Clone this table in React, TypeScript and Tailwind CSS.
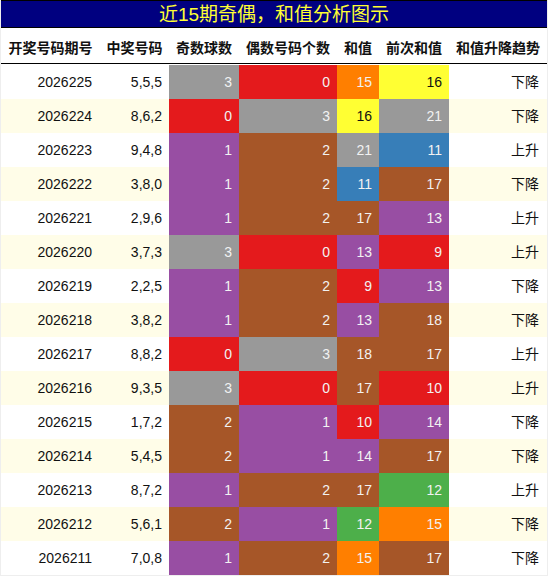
const C = {
  gray: "bg-[#999999] text-[#f2f2f2]",
  red: "bg-[#e41a1c] text-[#f2f2f2]",
  orange: "bg-[#ff7f00] text-[#f2f2f2]",
  yellow: "bg-[#ffff33] text-[#111111]",
  purple: "bg-[#984ea3] text-[#f2f2f2]",
  brown: "bg-[#a65628] text-[#f2f2f2]",
  blue: "bg-[#377eb8] text-[#f2f2f2]",
  green: "bg-[#4daf4a] text-[#f2f2f2]",
};

type Row = {
  issue: string;
  nums: string;
  odd: [string, string];
  even: [string, string];
  sum: [string, string];
  prev: [string, string];
  trend: string;
};

const rows: Row[] = [
  { issue: "2026225", nums: "5,5,5", odd: ["3", C.gray], even: ["0", C.red], sum: ["15", C.orange], prev: ["16", C.yellow], trend: "下降" },
  { issue: "2026224", nums: "8,6,2", odd: ["0", C.red], even: ["3", C.gray], sum: ["16", C.yellow], prev: ["21", C.gray], trend: "下降" },
  { issue: "2026223", nums: "9,4,8", odd: ["1", C.purple], even: ["2", C.brown], sum: ["21", C.gray], prev: ["11", C.blue], trend: "上升" },
  { issue: "2026222", nums: "3,8,0", odd: ["1", C.purple], even: ["2", C.brown], sum: ["11", C.blue], prev: ["17", C.brown], trend: "下降" },
  { issue: "2026221", nums: "2,9,6", odd: ["1", C.purple], even: ["2", C.brown], sum: ["17", C.brown], prev: ["13", C.purple], trend: "上升" },
  { issue: "2026220", nums: "3,7,3", odd: ["3", C.gray], even: ["0", C.red], sum: ["13", C.purple], prev: ["9", C.red], trend: "上升" },
  { issue: "2026219", nums: "2,2,5", odd: ["1", C.purple], even: ["2", C.brown], sum: ["9", C.red], prev: ["13", C.purple], trend: "下降" },
  { issue: "2026218", nums: "3,8,2", odd: ["1", C.purple], even: ["2", C.brown], sum: ["13", C.purple], prev: ["18", C.brown], trend: "下降" },
  { issue: "2026217", nums: "8,8,2", odd: ["0", C.red], even: ["3", C.gray], sum: ["18", C.brown], prev: ["17", C.brown], trend: "上升" },
  { issue: "2026216", nums: "9,3,5", odd: ["3", C.gray], even: ["0", C.red], sum: ["17", C.brown], prev: ["10", C.red], trend: "上升" },
  { issue: "2026215", nums: "1,7,2", odd: ["2", C.brown], even: ["1", C.purple], sum: ["10", C.red], prev: ["14", C.purple], trend: "下降" },
  { issue: "2026214", nums: "5,4,5", odd: ["2", C.brown], even: ["1", C.purple], sum: ["14", C.purple], prev: ["17", C.brown], trend: "下降" },
  { issue: "2026213", nums: "8,7,2", odd: ["1", C.purple], even: ["2", C.brown], sum: ["17", C.brown], prev: ["12", C.green], trend: "上升" },
  { issue: "2026212", nums: "5,6,1", odd: ["2", C.brown], even: ["1", C.purple], sum: ["12", C.green], prev: ["15", C.orange], trend: "下降" },
  { issue: "2026211", nums: "7,0,8", odd: ["1", C.purple], even: ["2", C.brown], sum: ["15", C.orange], prev: ["17", C.brown], trend: "下降" },
];

const headers = ["开奖号码期号", "中奖号码", "奇数球数", "偶数号码个数", "和值", "前次和值", "和值升降趋势"];

const cols = "grid grid-cols-[99px_69px_70px_98px_42px_70px_98px]";

function Cell({ value, color }: { value: string; color: string }) {
  return <div className={`flex items-center justify-end pr-[7px] ${color}`}>{value}</div>;
}

export default function App() {
  return (
    <div
      className="w-[548px] h-[576px] bg-white border-x border-b border-[#eeeeee] text-[14px] text-[#111111]"
      style={{ fontFamily: '"Liberation Sans", "Noto Sans CJK SC", sans-serif' }}
    >
      {/* Title */}
      <div className="h-[28px] bg-[#000080] border-y border-black flex items-center justify-center text-[19px] text-[#ffff33] leading-none">
        近15期奇偶，和值分析图示
      </div>

      {/* Header */}
      <div className={`${cols} h-[36px] pt-[5px] border-b border-black font-bold`}>
        {headers.map((h) => (
          <div key={h} className="flex items-center justify-center whitespace-nowrap">
            {h}
          </div>
        ))}
      </div>

      <div className="pt-px">
        {rows.map((r, i) => (
          <div key={r.issue} className={`${cols} h-[34px] ${i % 2 === 1 ? "bg-[#fffde8]" : "bg-white"}`}>
            <div className="flex items-center justify-end pr-[8px]">{r.issue}</div>
            <div className="flex items-center justify-end pr-[7px]">{r.nums}</div>
            <Cell value={r.odd[0]} color={r.odd[1]} />
            <Cell value={r.even[0]} color={r.even[1]} />
            <Cell value={r.sum[0]} color={r.sum[1]} />
            <Cell value={r.prev[0]} color={r.prev[1]} />
            <div className="flex items-center justify-end pr-[8px]">{r.trend}</div>
          </div>
        ))}
      </div>
    </div>
  );
}
